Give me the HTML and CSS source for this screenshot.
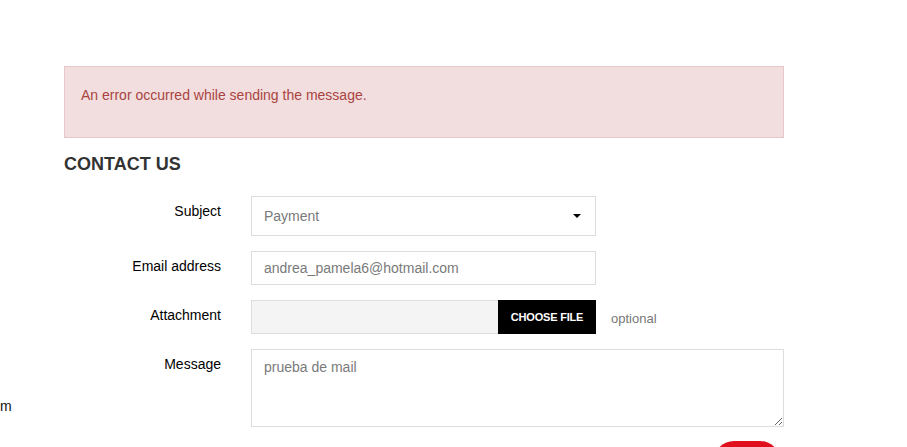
FILE: index.html
```html
<!DOCTYPE html>
<html lang="en">
<head>
<meta charset="utf-8">
<title>Contact us</title>
<link rel="stylesheet" href="styles.css">
</head>
<body>
<span class="stray">m</span>
<main class="page">
  <div class="alert">An error occurred while sending the message.</div>
  <h1 class="title">CONTACT US</h1>
  <form class="form">
    <div class="row">
      <label class="label">Subject</label>
      <div class="field select">
        <span class="value">Payment</span>
        <svg class="caret" width="8" height="4" viewBox="0 0 8 4"><path d="M0 0H8L4 4Z" fill="#000"/></svg>
      </div>
    </div>
    <div class="row">
      <label class="label">Email address</label>
      <div class="field input"><span class="value">andrea_pamela6@hotmail.com</span></div>
    </div>
    <div class="row">
      <label class="label">Attachment</label>
      <div class="attach">
        <div class="file">
          <div class="file-name"></div>
          <div class="file-btn">CHOOSE FILE</div>
        </div>
        <span class="optional">optional</span>
      </div>
    </div>
    <div class="row">
      <label class="label">Message</label>
      <textarea class="textarea">prueba de mail</textarea>
    </div>
    <div class="actions">
      <button type="button" class="send"></button>
    </div>
  </form>
</main>
</body>
</html>
```

FILE: styles.css
```css
html, body {
  margin: 0;
  padding: 0;
  background: #fff;
  overflow: hidden;
}
body {
  font-family: "Liberation Sans", Arial, sans-serif;
  font-size: 14px;
  color: #000;
  position: relative;
  height: 447px;
}
.stray {
  position: absolute;
  left: 0;
  top: 396px;
  font-size: 14px;
  line-height: 20px;
  color: #111;
}
.page {
  width: 720px;
  padding: 66px 0 0 64px;
}
.alert {
  box-sizing: border-box;
  height: 72px;
  background: #f2dede;
  border: 1px solid #e6c8cc;
  color: #a94442;
  font-size: 14px;
  line-height: 20px;
  padding: 18px 16px;
}
.title {
  margin: 15px 0 21px;
  font-size: 18px;
  line-height: 22px;
  font-weight: bold;
  color: #333;
}
.form {
  display: flex;
  flex-direction: column;
  gap: 15px;
}
.row {
  display: grid;
  grid-template-columns: 187px 1fr;
  align-items: start;
}
.label {
  text-align: right;
  padding-right: 30px;
  padding-top: 5px;
  line-height: 20px;
  font-size: 14px;
  color: #000;
}
.field {
  box-sizing: border-box;
  width: 345px;
  border: 1px solid #ddd;
  display: flex;
  align-items: center;
  padding: 0 14px 0 12px;
  color: #7a7a7a;
  font-size: 14px;
  background: #fff;
}
.select {
  height: 40px;
  justify-content: space-between;
}
.input {
  height: 34px;
}
.attach {
  display: flex;
  align-items: center;
}
.file {
  box-sizing: border-box;
  width: 345px;
  height: 34px;
  display: flex;
  border: 1px solid #ddd;
  border-right: 0;
  background: #f4f4f4;
}
.file-name {
  flex: 1;
}
.file-btn {
  width: 98px;
  margin: -1px 0;
  background: #000;
  color: #fff;
  font-size: 11px;
  font-weight: bold;
  display: flex;
  align-items: center;
  justify-content: center;
  letter-spacing: -0.2px;
}
.optional {
  margin-left: 15px;
  font-size: 13px;
  color: #777;
  padding-top: 3px;
}
.textarea {
  box-sizing: border-box;
  width: 533px;
  height: 78px;
  border: 1px solid #ddd;
  padding: 8px 12px;
  font-family: "Liberation Sans", Arial, sans-serif;
  font-size: 14px;
  line-height: 18px;
  color: #7a7a7a;
  resize: both;
  margin: 0;
  outline: none;
}
.actions {
  display: flex;
  justify-content: flex-end;
  padding-right: 4px;
  margin-top: -1px;
}
.send {
  width: 66px;
  height: 40px;
  border: 0;
  border-radius: 20px;
  background: #e0101f;
  padding: 0;
}
```
